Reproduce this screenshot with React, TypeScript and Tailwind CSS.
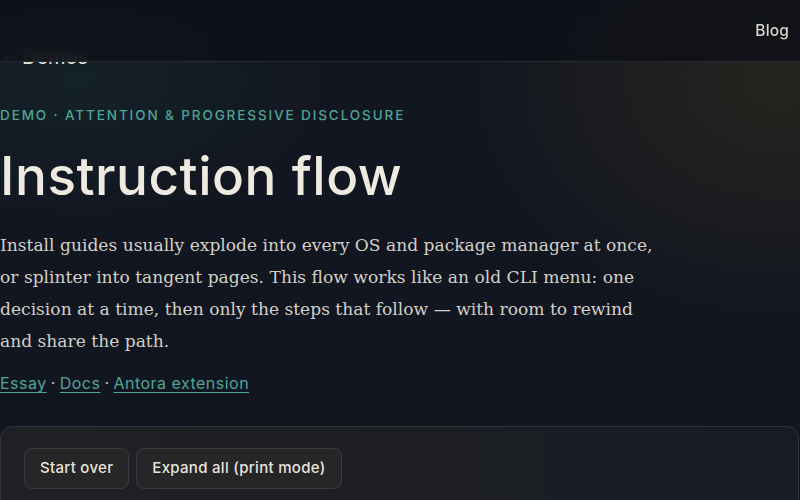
import { ArrowLeft } from 'lucide-react';

const sans = "font-['Inter','DejaVu_Sans',sans-serif]";

export default function App() {
  return (
    <div className="relative h-[500px] w-[800px] overflow-hidden bg-[#121620] text-[#e8e4da]">
      {/* background glows */}
      <div className="pointer-events-none absolute inset-0 bg-[radial-gradient(ellipse_420px_320px_at_780px_80px,#25241f_0%,rgba(37,36,31,0.5)_40%,transparent_75%)]" />
      <div className="pointer-events-none absolute inset-0 bg-[radial-gradient(ellipse_360px_200px_at_80px_80px,rgba(22,38,44,0.7)_0%,transparent_70%)]" />

      {/* sticky header */}
      <header className="absolute inset-x-0 top-0 z-10 flex h-[62px] items-center justify-end border-b border-[#262b32] bg-[#0e1118]/85 px-[11px] backdrop-blur-sm">
        <a className={`${sans} text-[15.5px] font-medium tracking-[0.01em] text-[#d9d5cc]`}>Blog</a>
      </header>

      <main className="relative flex flex-col items-start">
        <a className={`${sans} mt-[43px] flex h-[28px] items-center gap-[6px] pl-[1px] text-[20px] text-[#e6e2d9]`}>
          <ArrowLeft className="h-[15px] w-[15px]" strokeWidth={1.5} />
          Demos
        </a>

        <p className={`${sans} mt-[36px] h-[16px] text-[13.5px] font-medium uppercase leading-[16px] tracking-[0.14em] text-[#4ea596]`}>
          Demo · Attention &amp; Progressive Disclosure
        </p>

        <h1 className={`${sans} mt-[25px] text-[53px] font-[550] leading-[57px] tracking-[0.01em] text-[#eeeae0]`}>
          Instruction flow
        </h1>

        <p className="mt-[24px] font-['DejaVu_Serif','Liberation_Serif',serif] text-[17.1px] leading-[32px] text-[#d4d0c7]">
          Install guides usually explode into every OS and package manager at once,
          <br />
          or splinter into tangent pages. This flow works like an old CLI menu: one
          <br />
          decision at a time, then only the steps that follow — with room to rewind
          <br />
          and share the path.
        </p>

        <div className={`${sans} mt-[14px] flex h-[24px] items-center gap-[4px] text-[16px] tracking-[0.03em] text-[#4ea596]`}>
          <a className="underline decoration-1 underline-offset-[3px]">Essay</a>
          <span className="text-[#c9c5bc]">·</span>
          <a className="underline decoration-1 underline-offset-[3px]">Docs</a>
          <span className="text-[#c9c5bc]">·</span>
          <a className="underline decoration-1 underline-offset-[3px]">Antora extension</a>
        </div>

        <section className="mt-[31px] h-[120px] w-[799px] rounded-xl border border-[#2e3239] bg-gradient-to-r from-[#202124] to-[#191c24] pl-[23px] pt-[21px]">
          <div className="flex gap-[7px]">
            <button className={`${sans} h-[41px] rounded-lg border border-[#3a3b3e] bg-[#262629] px-[15px] text-[15px] font-medium tracking-[0.02em] text-[#e8e4da]`}>
              Start over
            </button>
            <button className={`${sans} h-[41px] rounded-lg border border-[#3a3b3e] bg-[#262629] px-[15px] text-[15px] font-medium tracking-[0.02em] text-[#e8e4da]`}>
              Expand all (print mode)
            </button>
          </div>
        </section>
      </main>
    </div>
  );
}
